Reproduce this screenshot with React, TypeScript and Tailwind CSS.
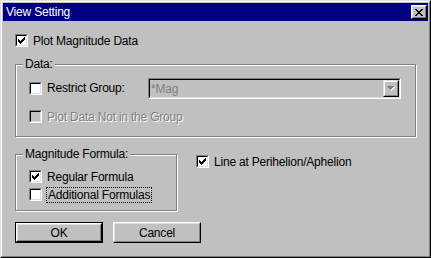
import type { ReactNode } from "react";

const CHECK_COLS = [2, 3, 4, 3, 2, 1, 0];

function CheckMark({ color = "#000" }: { color?: string }) {
  return (
    <svg width="7" height="7" viewBox="0 0 7 7" shapeRendering="crispEdges">
      {CHECK_COLS.map((top, i) => (
        <rect key={i} x={i} y={top} width="1" height="3" fill={color} />
      ))}
    </svg>
  );
}

function CheckBox({ checked = false, disabled = false }: { checked?: boolean; disabled?: boolean }) {
  return (
    <div className="box-border h-[13px] w-[13px] shrink-0 border border-t-[#808080] border-l-[#808080] border-r-white border-b-white">
      <div
        className={`box-border h-full w-full border border-t-black border-l-black border-r-[#dfdfdf] border-b-[#dfdfdf] pl-[1px] pt-[1px] ${
          disabled ? "bg-[#c0c0c0]" : "bg-white"
        }`}
      >
        {checked && <CheckMark color={disabled ? "#808080" : "#000"} />}
      </div>
    </div>
  );
}

function Label({ children, disabled = false }: { children: ReactNode; disabled?: boolean }) {
  return (
    <span
      className={`ml-[5px] whitespace-nowrap ${
        disabled ? "text-[#808080] [text-shadow:1px_1px_0_#fff]" : "text-black"
      }`}
    >
      {children}
    </span>
  );
}

function GroupBox({ title, className, children }: { title: string; className: string; children: ReactNode }) {
  return (
    <div
      className={`relative box-border border border-[#808080] shadow-[inset_1px_1px_0_#fff,1px_1px_0_#fff] ${className}`}
    >
      <span className="absolute left-[7px] top-[-8px] bg-[#c0c0c0] px-[2px] leading-[14px]">{title}</span>
      {children}
    </div>
  );
}

function Button({ children, isDefault = false }: { children: ReactNode; isDefault?: boolean }) {
  const face = (
    <div className="box-border h-full w-full border border-t-white border-l-white border-r-black border-b-black">
      <div className="box-border flex h-full w-full items-center justify-center border border-t-[#dfdfdf] border-l-[#dfdfdf] border-r-[#808080] border-b-[#808080]">
        {children}
      </div>
    </div>
  );
  return (
    <div className={`box-border h-[21px] w-[88px] ${isDefault ? "border border-black" : ""}`}>{face}</div>
  );
}

function ComboBox() {
  return (
    <div className="box-border h-[21px] w-[253px] border border-t-[#808080] border-l-[#808080] border-r-white border-b-white">
      <div className="box-border flex h-full w-full items-center border border-t-black border-l-black border-r-[#dfdfdf] border-b-[#dfdfdf] bg-[#c0c0c0]">
        <span className="ml-[1px] flex-1 text-[#808080]">*Mag</span>
        <div className="box-border h-[17px] w-[16px] border border-t-[#dfdfdf] border-l-[#dfdfdf] border-r-black border-b-black">
          <div className="box-border flex h-full w-full items-center justify-center border border-t-white border-l-white border-r-[#808080] border-b-[#808080]">
            <svg width="8" height="5" viewBox="0 0 8 5" shapeRendering="crispEdges">
              <path d="M1 1h7v1H7v1H6v1H5v1H4V4H3V3H2V2H1z" fill="#fff" />
              <path d="M0 0h7v1H6v1H5v1H4v1H3V3H2V2H1V1H0z" fill="#808080" />
            </svg>
          </div>
        </div>
      </div>
    </div>
  );
}

export default function App() {
  return (
    <div className="box-border h-[258px] w-[431px] border border-t-[#dfdfdf] border-l-[#dfdfdf] border-r-black border-b-black bg-[#c0c0c0] font-['Liberation_Sans',Arial,sans-serif] text-[12px] leading-[14px] tracking-[-0.2px] text-black">
      <div className="box-border h-full w-full border border-t-white border-l-white border-r-[#808080] border-b-[#808080] p-[1px]">
        <div className="flex h-[18px] items-center justify-between bg-[#000080] pl-[3px] pr-[1px]">
          <span className="text-white">View Setting</span>
          <div className="box-border h-[14px] w-[16px] border border-t-white border-l-white border-r-black border-b-black">
            <div className="box-border flex h-full w-full items-center justify-center border border-t-[#dfdfdf] border-l-[#dfdfdf] border-r-[#808080] border-b-[#808080] bg-[#c0c0c0]">
              <svg width="8" height="7" viewBox="0 0 8 7" shapeRendering="crispEdges">
                <path d="M0 0h2l2 2.5L6 0h2L5 3.5 8 7H6L4 4.5 2 7H0l3-3.5z" fill="#000" />
              </svg>
            </div>
          </div>
        </div>

        <div className="pl-[12px]">
          <div className="mt-[13px] flex h-[13px] items-center">
            <CheckBox checked />
            <Label>Plot Magnitude Data</Label>
          </div>

          <GroupBox title="Data:" className="mt-[17px] h-[73px] w-[401px]">
            <div className="ml-[13px] mt-[13px] flex items-start">
              <div className="flex w-[119px] items-center pt-[3px]">
                <CheckBox />
                <Label>Restrict Group:</Label>
              </div>
              <ComboBox />
            </div>
            <div className="ml-[13px] mt-[11px] flex h-[13px] items-center">
              <CheckBox disabled />
              <Label disabled>Plot Data Not in the Group</Label>
            </div>
          </GroupBox>

          <div className="mt-[17px] flex items-start">
            <GroupBox title="Magnitude Formula:" className="h-[57px] w-[162px]">
              <div className="ml-[13px] mt-[15px] flex flex-col gap-[5px]">
                <div className="flex h-[13px] items-center">
                  <CheckBox checked />
                  <Label>Regular Formula</Label>
                </div>
                <div className="flex h-[13px] items-center">
                  <CheckBox />
                  <span className="ml-[4px] whitespace-nowrap border border-dotted border-black px-[1px] py-[0px]">
                    Additional Formulas
                  </span>
                </div>
              </div>
            </GroupBox>
            <div className="ml-[19px] mt-[1px] flex h-[13px] items-center">
              <CheckBox checked />
              <Label>Line at Perihelion/Aphelion</Label>
            </div>
          </div>

          <div className="mt-[11px] flex gap-[10px]">
            <Button isDefault>OK</Button>
            <Button>Cancel</Button>
          </div>
        </div>
      </div>
    </div>
  );
}
